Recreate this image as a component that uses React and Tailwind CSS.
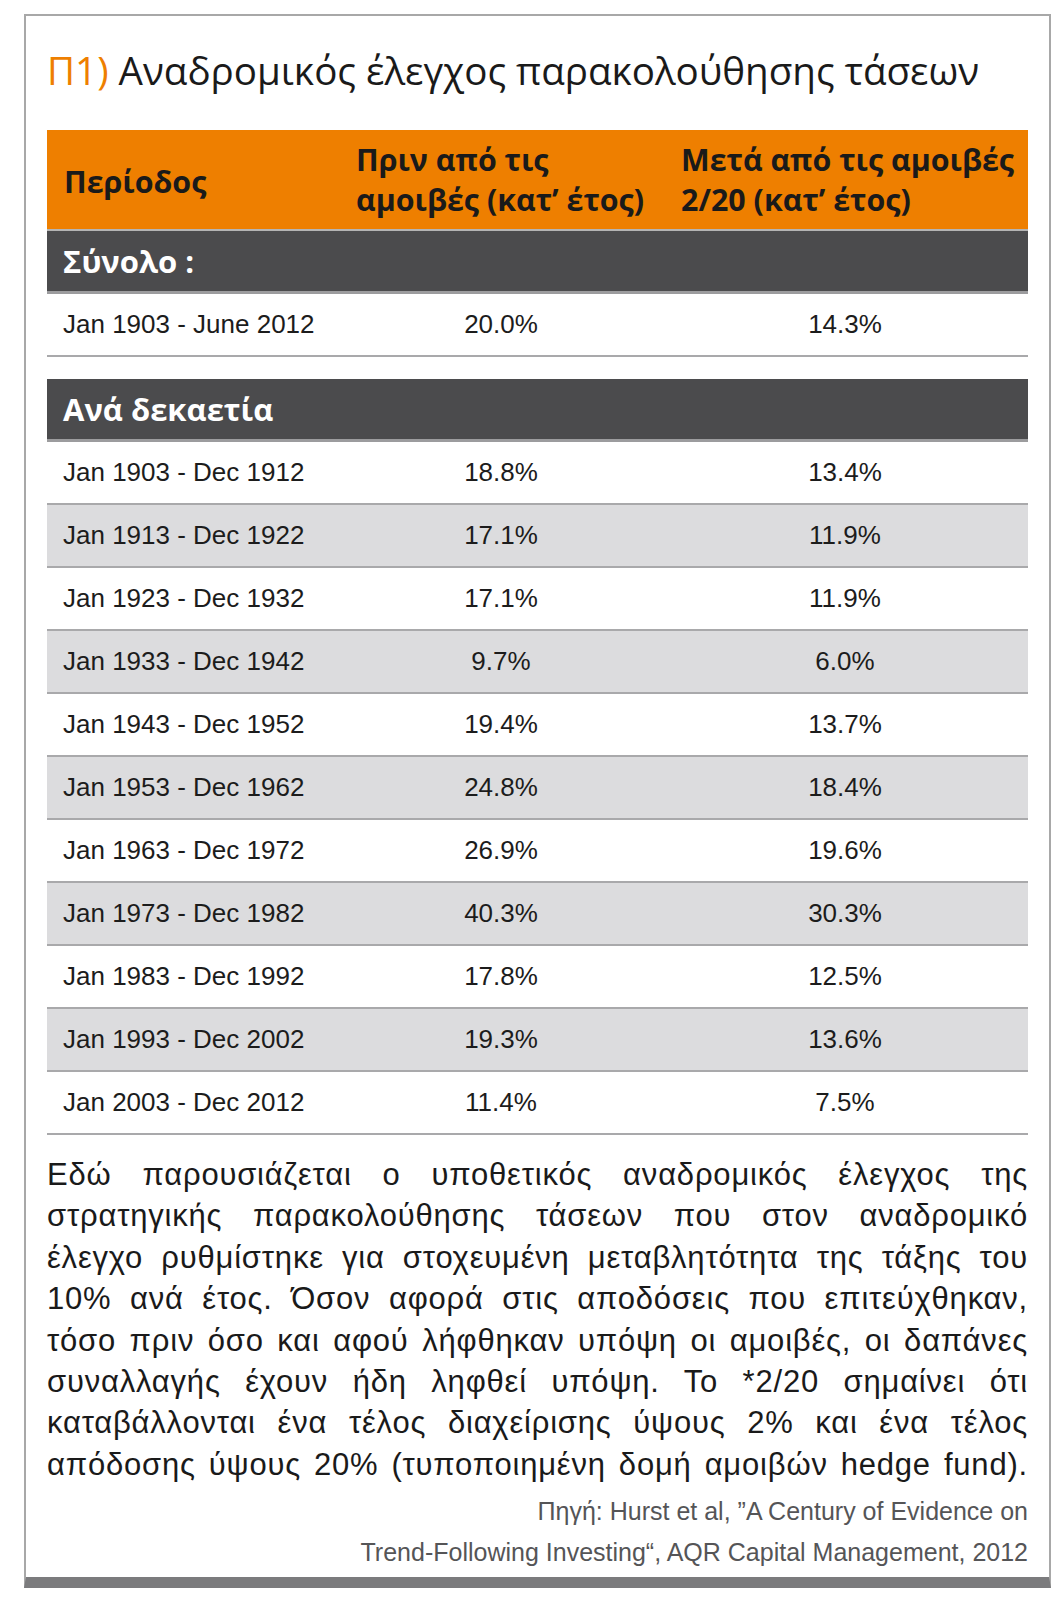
import React from "react";

const rows = [
  ["Jan 1903 - Dec 1912", "18.8%", "13.4%"],
  ["Jan 1913 - Dec 1922", "17.1%", "11.9%"],
  ["Jan 1923 - Dec 1932", "17.1%", "11.9%"],
  ["Jan 1933 - Dec 1942", "9.7%", "6.0%"],
  ["Jan 1943 - Dec 1952", "19.4%", "13.7%"],
  ["Jan 1953 - Dec 1962", "24.8%", "18.4%"],
  ["Jan 1963 - Dec 1972", "26.9%", "19.6%"],
  ["Jan 1973 - Dec 1982", "40.3%", "30.3%"],
  ["Jan 1983 - Dec 1992", "17.8%", "12.5%"],
  ["Jan 1993 - Dec 2002", "19.3%", "13.6%"],
  ["Jan 2003 - Dec 2012", "11.4%", "7.5%"],
];

// line breaks as in the printed note
const lines = [
  "Εδώ παρουσιάζεται ο υποθετικός αναδρομικός έλεγχος της",
  "στρατηγικής παρακολούθησης τάσεων που στον αναδρομικό",
  "έλεγχο ρυθμίστηκε για στοχευμένη μεταβλητότητα της τάξης του",
  "10% ανά έτος. Όσον αφορά στις αποδόσεις που επιτεύχθηκαν,",
  "τόσο πριν όσο και αφού λήφθηκαν υπόψη οι αμοιβές, οι δαπάνες",
  "συναλλαγής έχουν ήδη ληφθεί υπόψη. Το *2/20 σημαίνει ότι",
  "καταβάλλονται ένα τέλος διαχείρισης ύψους 2% και ένα τέλος",
  "απόδοσης ύψους 20% (τυποποιημένη δομή αμοιβών hedge fund).",
];

function DataRow({ period, before, after, shaded }) {
  return (
    <div
      className={`grid grid-cols-[293px_322px_1fr] h-[63px] items-center border-b-2 border-[#a9a9ab] text-[26px] text-[#1c1c1c] ${
        shaded ? "bg-[#dcdcde]" : "bg-white"
      }`}
    >
      <div className="pl-[16px]">{period}</div>
      <div className="text-center">{before}</div>
      <div className="text-center">{after}</div>
    </div>
  );
}

function Band({ children }) {
  return (
    <div className="h-[63px] flex items-center bg-[#4b4b4d] border-b-[3px] border-[#9c9c9e] pl-[16px] font-['Open_Sans',sans-serif] font-bold text-[31px] text-white">
      {children}
    </div>
  );
}

export default function App() {
  return (
    <div className="bg-white min-h-[1620px] pt-[14px] pl-[24px] font-['Liberation_Sans',Arial,sans-serif]">
      <div className="w-[1027px] border-2 border-b-[11px] border-[#a8a8a8] border-b-[#7b7b7d] px-[21px]">
        <h1 className="pt-[34px] text-[38.6px] leading-[40px] font-['Open_Sans',sans-serif] text-[#1a1a1a] whitespace-nowrap">
          <span className="text-[#ee7f00]">Π1)</span> Αναδρομικός έλεγχος
          παρακολούθησης τάσεων
        </h1>

        <div className="mt-[40px]">
          <div className="grid grid-cols-[293px_322px_1fr] h-[101px] items-center bg-[#ee7f00] border-b-2 border-[#b4b4b4] font-['Open_Sans',sans-serif] font-bold text-[30.4px] leading-[40px] text-[#1a1a1a] whitespace-nowrap">
            <div className="pl-[17px] pt-[4px]">Περίοδος</div>
            <div className="pl-[16px]">
              Πριν από τις
              <br />
              αμοιβές (κατ’ έτος)
            </div>
            <div className="pl-[19px]">
              Μετά από τις αμοιβές
              <br />
              2/20 (κατ’ έτος)
            </div>
          </div>

          <Band>Σύνολο :</Band>
          <DataRow period="Jan 1903 - June 2012" before="20.0%" after="14.3%" />

          <div className="h-[22px]" />

          <Band>Ανά δεκαετία</Band>
          {rows.map((r, i) => (
            <DataRow
              key={r[0]}
              period={r[0]}
              before={r[1]}
              after={r[2]}
              shaded={i % 2 === 1}
            />
          ))}
        </div>

        <div className="mt-[19px] text-[31px] tracking-[0.8px] leading-[41.4px] text-[#1a1a1a]">
          {lines.map((l) => (
            <p key={l} className="text-justify [text-align-last:justify]">
              {l}
            </p>
          ))}
        </div>

        <div className="mt-[6px] pb-[4px] text-right text-[25px] leading-[41px] text-[#555557]">
          <p>Πηγή: Hurst et al, ”A Century of Evidence on</p>
          <p>Trend-Following Investing“, AQR Capital Management, 2012</p>
        </div>
      </div>
    </div>
  );
}
